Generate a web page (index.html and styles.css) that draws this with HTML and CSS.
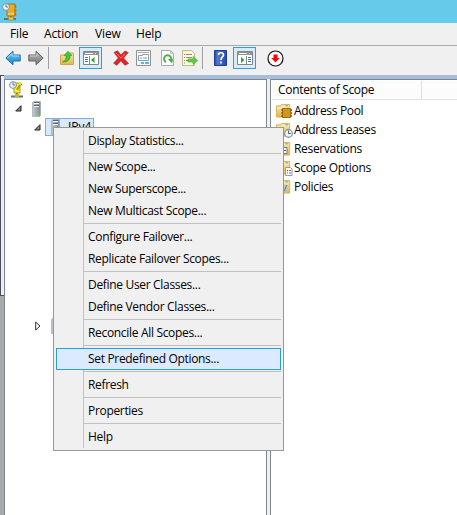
FILE: index.html
```html
<!DOCTYPE html>
<html lang="en">
<head>
<meta charset="utf-8">
<title>DHCP</title>
<link rel="stylesheet" href="styles.css">
</head>
<body>
<svg class="defs" width="0" height="0">
  <defs>
    <linearGradient id="steel" x2="1"><stop offset="0" stop-color="#c5ccd1"/><stop offset="1" stop-color="#7f8b93"/></linearGradient>
    <linearGradient id="gold" y2="1" x2="0"><stop offset="0" stop-color="#fbe7a5"/><stop offset="1" stop-color="#e3b655"/></linearGradient>
    <linearGradient id="sky" y2="1" x2="0"><stop offset="0" stop-color="#65c8f5"/><stop offset="1" stop-color="#1787cf"/></linearGradient>
    <linearGradient id="gray" y2="1" x2="0"><stop offset="0" stop-color="#b8b8b8"/><stop offset="1" stop-color="#777"/></linearGradient>
    <linearGradient id="navy" x2="1"><stop offset="0" stop-color="#2445ae"/><stop offset=".25" stop-color="#5277d6"/><stop offset="1" stop-color="#2448b8"/></linearGradient>
    <symbol id="server" viewBox="0 0 9 16"><path d="M.5 1.500 1.500.500h7V14.500L7.500 15.500H.5z" fill="url(#steel)" stroke="#98a1a7" stroke-width=".6"/><path d="M2 2.500h5M2 5.500h5" stroke="#fff"/><path d="M2 1.500h5M2 4.500h5" stroke="#46525a" stroke-width=".8"/><path d="M5 13h2v2H5z" fill="#50ed36"/></symbol>
    <symbol id="folder" viewBox="0 0 16 16"><path d="M.5 2.500H5L6 1h8.500v13.500H.5z" fill="url(#gold)" stroke="#d9ae55"/><path d="M1 5h5l1-1.500h7" fill="none" stroke="#fff3c9"/><path d="M10 2.500h3" stroke="#489bd9"/></symbol>
    <symbol id="clock" viewBox="0 0 8 8"><circle cx="4" cy="4" r="3.400" fill="#edf5f8" stroke="#78909d"/><path d="M4 1.500V4h2" fill="none" stroke="#3d5362" stroke-width=".8"/></symbol>
  </defs>
</svg>
<header class="titlebar">
  <svg width="16" height="18" viewBox="0 0 16 18"><path d="M5 1h8v12H5z" fill="#edaa22" stroke="#9a6914" stroke-width=".8"/><path d="M13.500 2v3M13.500 6v3M13.500 10v3" stroke="#cf6d1e" stroke-width="1.500"/><path d="M6 11h6" stroke="#ffe38c"/><path d="M9 13v2M2 16h12" stroke="#65727a" stroke-width="2"/><path d="M6.500 14h5v3h-5z" fill="#f4c92f" stroke="#a67b1c" stroke-width=".6"/><use href="#clock" x="0" y="0" width="8" height="8"/></svg>
</header>
<nav class="menubar"><span class="m-file">File</span><span class="m-action">Action</span><span class="m-view">View</span><span>Help</span></nav>
<div class="toolbar">
  <svg class="t-back" width="16" height="16" viewBox="0 0 16 16"><path d="M.8 8 8 1.200V5h7.200v6H8v3.800z" fill="url(#sky)" stroke="#286e9b"/><path d="M2.500 8 7 3.500V6h7" fill="none" stroke="#9fe3ff"/></svg>
  <svg class="t-forward" width="16" height="16" viewBox="0 0 16 16"><path d="M15.200 8 8 1.200V5H.8v6H8v3.800z" fill="url(#gray)" stroke="#666"/><path d="M2 6h7V3.500" fill="none" stroke="#ccc"/></svg>
  <i class="divider"></i>
  <svg class="t-up" width="16" height="16" viewBox="0 0 16 16"><path d="M.5 5H7l1.500-2h5v11.500H.5z" fill="url(#gold)" stroke="#d0a74f"/><path d="M2.500 12c3-1 4-4 3.500-6.500H4L8 1.300l4 4.200h-2c1 4-3 7-7.500 6.500z" fill="#48c72f" stroke="#329623" stroke-width=".6"/></svg>
  <span class="toggle"><svg width="16" height="14" viewBox="0 0 16 14"><path d="M.5.500h15v13H.5z" fill="#fff" stroke="#858585"/><path d="M1 1h14v3H1z" fill="#929292"/><path d="M2 2.500h8M12 2.500h1" stroke="#fff"/><path d="M6.500 5v8" stroke="#888"/><path d="M2 6.500h3M2 8.500h3M2 10.500h3" stroke="#4278b2"/><path d="M11.500 6v6L8 9z" fill="#2aae1e"/></svg></span>
  <svg class="t-delete" width="16" height="16" viewBox="0 0 16 16"><path d="M1 2.500 4.500.800 8 5l4-4 3.200 1.500L10.500 8l5 5.500-3.700 1.700L8 10.700l-4.200 4.500-3.200-2L5.300 8z" fill="#e3222b" stroke="#a92c30" stroke-width=".7"/><path d="m3 3 5 5 4-4.500" fill="none" stroke="#ff7777"/></svg>
  <svg class="t-props" width="16" height="16" viewBox="0 0 16 16"><path d="M.5.500h14v15H.5z" fill="#f7f7f7" stroke="#929292"/><path d="M2 2.500h11" stroke="#aaa"/><path d="M2.500 5.500h4V4.500h6v6h-10z" fill="#fff" stroke="#929da4"/><path d="M4 8h2m1 0h4" stroke="#57a5cf"/><path d="M5 13h3m1 0h4" stroke="#51b9e4" stroke-width="2"/></svg>
  <svg class="t-refresh" width="14" height="16" viewBox="0 0 14 16"><path d="M.5.500h9l3 3v12H.5z" fill="#fff" stroke="#aaa"/><path d="M9.500.500v3h3" fill="none" stroke="#bbb"/><path d="M5 12a3.600 3.600 0 1 1 4.800-1.500" fill="none" stroke="#4ab547" stroke-width="2"/><path d="M7 9h5l-1 4.500z" fill="#40ac3d"/></svg>
  <svg class="t-export" width="16" height="16" viewBox="0 0 16 16"><path d="M.5.500h9l3 3v12H.5z" fill="#fff9df" stroke="#c2b98d"/><path d="M2 4.500h1m1 0h6M2 7.500h1m1 0h6M2 10.500h1m1 0h4M2 13h1" stroke="#888"/><path d="M6 9h5V6.500L15.700 10.500 11 14.500V12H6z" fill="#60ce3c" stroke="#43a62c" stroke-width=".6"/></svg>
  <i class="divider"></i>
  <svg class="t-help" width="13" height="16" viewBox="0 0 13 16"><path d="M.5.500h12v15H.5z" fill="url(#navy)" stroke="#203f91"/><path d="M4.500 5c0-3 5-3 5 0 0 2-2.500 2-2.500 5M7 11.500v2" fill="none" stroke="#fff" stroke-width="1.700"/></svg>
  <span class="toggle"><svg width="16" height="14" viewBox="0 0 16 14"><path d="M.5.500h15v13H.5z" fill="#fff" stroke="#858585"/><path d="M1 1h14v3H1z" fill="#929292"/><path d="M2 2.500h8M12 2.500h1" stroke="#fff"/><path d="M9.500 5v8" stroke="#888"/><path d="M11 6.500h3M11 8.500h3M11 10.500h3" stroke="#4278b2"/><path d="M4 6v6l3.500-3z" fill="#2aae1e"/></svg></span>
  <svg class="t-down" width="17" height="17" viewBox="0 0 17 17"><circle cx="8.500" cy="8.500" r="7.500" fill="#fff" stroke="#111" stroke-width="1.200"/><path d="M6.500 4.500h4V8h2.300l-4.300 4.500L4.200 8h2.300z" fill="#f00"/></svg>
</div>
<main class="workspace">
  <aside class="edge"><div class="edge-window"></div></aside>
  <div class="panes">
  <section class="tree">
    <div class="node root"><svg width="16" height="17" viewBox="0 0 16 17"><path d="M5 2h6v10H5z" fill="#fff01a" stroke="#8c8620" stroke-width=".8"/><path d="m8 9 4-7" stroke="#ad9e16" stroke-width="2"/><path d="M10 1h2v3h-2z" fill="#f4e72e"/><path d="M12 3h1v1h-1z" fill="#e22"/><path d="M8 12v2M2 15.500h12" stroke="#6d7070" stroke-width="2"/><path d="M6 13h4v3H6z" fill="#c2b834"/><use href="#clock" width="8" height="8"/></svg><span>DHCP</span></div>
    <div class="node host"><svg class="arrow" width="7" height="7" viewBox="0 0 7 7"><path d="M6 .7V6H.7z" fill="#888" stroke="#222"/></svg><svg width="9" height="16"><use href="#server"/></svg></div>
    <div class="node ipv4"><svg class="arrow" width="7" height="7" viewBox="0 0 7 7"><path d="M6 .7V6H.7z" fill="#888" stroke="#222"/></svg><span class="selected"><svg width="12" height="16"><use href="#server" width="9" height="16"/><path d="M6 10 9 7.500 12 10v5H6z" fill="#46a642"/></svg><span>IPv4</span></span></div>
    <div class="node ipv6"><svg class="arrow" width="6" height="10" viewBox="0 0 6 10"><path d="M.7 1v8L5 5z" fill="#fff" stroke="#333"/></svg><svg width="9" height="16"><use href="#server"/></svg></div>
  </section>
  <div class="splitter"></div>
  <section class="list">
    <div class="list-head"><span>Contents of Scope</span></div>
    <div class="entry"><svg width="17" height="16"><use href="#folder" width="15" height="16"/><path d="M6.500 5.500h8v9h-8z" fill="#d79518" stroke="#9e6c19"/><path d="M5 7h2M5 10h2M5 13h2" stroke="#715018"/><path d="M15.500 6v2" stroke="#d33"/><path d="M15.500 9v2" stroke="#2ba64a"/><path d="M15.500 12v2" stroke="#3782df"/></svg><span>Address Pool</span></div>
    <div class="entry"><svg width="17" height="16"><use href="#folder" width="15" height="16"/><use href="#clock" x="8" y="7" width="9" height="9"/></svg><span>Address Leases</span></div>
    <div class="entry"><svg width="17" height="16"><use href="#folder" width="15" height="16"/><path d="M6 6.500h5v6H6z" fill="#fff" stroke="#777"/><path d="M8 9.500h2" stroke="#456"/></svg><span>Reservations</span></div>
    <div class="entry"><svg width="17" height="16"><use href="#folder" width="15" height="16"/><path d="M9.500 7.500h5l1.500 1.500v6.500H9.500z" fill="#fff" stroke="#999"/><path d="M11 10.500h1m1 0h2M11 13h1m1 0h2" stroke="#667"/></svg><span>Scope Options</span></div>
    <div class="entry"><svg width="17" height="16"><use href="#folder" width="15" height="16"/><path d="M7 6h4v7H7z" fill="#bcc0b0"/><path d="m8 12 3-6" stroke="#777"/></svg><span>Policies</span></div>
  </section>
  </div>
</main>
<div class="context">
  <div class="group"><div class="item">Display Statistics...</div></div>
  <div class="group"><div class="item">New Scope...</div><div class="item">New Superscope...</div><div class="item">New Multicast Scope...</div></div>
  <div class="group"><div class="item">Configure Failover...</div><div class="item">Replicate Failover Scopes...</div></div>
  <div class="group"><div class="item">Define User Classes...</div><div class="item">Define Vendor Classes...</div></div>
  <div class="group"><div class="item">Reconcile All Scopes...</div></div>
  <div class="group"><div class="item active">Set Predefined Options...</div></div>
  <div class="group"><div class="item">Refresh</div></div>
  <div class="group"><div class="item">Properties</div></div>
  <div class="group"><div class="item">Help</div></div>
</div>
</body>
</html>
```
FILE: styles.css
```css
* { box-sizing: border-box; }
body { margin: 0; width: 457px; height: 515px; overflow: hidden; display: flex; flex-direction: column; background: #f0f0f0; color: #000; font: 12px/16px "Open Sans", "Noto Sans", sans-serif; letter-spacing: -.32px; }
svg { display: block; flex: none; }
.defs { position: absolute; }
.titlebar { height: 23px; padding: 3px 0 0 2px; background: #66caea; flex: none; }
.menubar { height: 23px; flex: none; display: flex; padding: 3px 0 0 10px; border-bottom: 1px solid #a9a9ad; letter-spacing: -.15px; }
.m-file { width: 34px; }
.m-action { width: 51px; }
.m-view { width: 41px; }
.toolbar { height: 29px; flex: none; display: flex; align-items: center; padding: 0 0 5px 5px; }
.divider { width: 1px; height: 22px; background: #a0a0a0; }
.t-forward { margin: 0 4px 0 7px; }
.t-up { margin: 0 3px 0 11px; }
.toggle { width: 23px; height: 22px; border: 1px solid #2f9fd7; background: #d9eaf9; display: flex; align-items: center; justify-content: center; }
.t-delete { margin: 0 7px 0 11px; }
.t-refresh { margin: 0 7px 0 9px; }
.t-export { margin-right: 4px; }
.t-help { margin: 0 6px 0 11px; }
.t-down { margin-left: 11px; }
.workspace { flex: 1; min-height: 0; display: flex; }
.edge { width: 4px; background: #aaa; }
.edge-window { height: 221px; border: solid #4d4d58; border-width: 1px 0 1px 1px; background: #e9eefb; }
.panes { flex: 1; display: flex; border-top: 4px solid #a6bddb; }
.tree { width: 263px; border: solid #80868f; border-width: 1px 1px 0; background: #fff; }
.node { height: 19px; display: flex; align-items: center; }
.root { padding-left: 4px; gap: 5px; letter-spacing: -.15px; }
.host { padding-left: 10px; gap: 10px; }
.ipv4 { height: 18px; padding-left: 29px; gap: 4px; }
.selected { display: flex; width: 49px; height: 18px; padding-left: 5px; gap: 5px; border: 1px solid #83acdc; background: #d9e8fb; letter-spacing: 0; }
.ipv6 { margin-top: 180px; padding-left: 30px; gap: 10px; }
.splitter { width: 3px; background: #f0f0f0; }
.list { flex: 1; border: solid #80868f; border-width: 1px 0 0 1px; background: #fff; padding: 1px 0 0 1px; }
.list-head { height: 19px; border-bottom: 1px solid #e2e2e2; background: #fcfcfc; margin-bottom: 1px; display: flex; line-height: 18px; }
.list-head span { width: 150px; border-right: 1px solid #dedede; padding-left: 6px; }
.entry { display: flex; align-items: center; height: 19px; padding-left: 4px; gap: 1px; }
.context { position: absolute; left: 53px; top: 127px; width: 231px; height: 324px; border: 1px solid #979797; background: linear-gradient(#c2c2c2, #c2c2c2) 29px 2px / 1px 318px no-repeat, #f0f0f0; padding: 2px; }
.group + .group::before { content: ""; display: block; height: 1px; margin: 1px 0 2px 28px; background: #c0c0c0; }
.item { height: 22px; padding-left: 32px; line-height: 22px; white-space: nowrap; }
.active { border: 1px solid #26a0da; background: #dbeaff; padding-left: 31px; line-height: 20px; }
```
